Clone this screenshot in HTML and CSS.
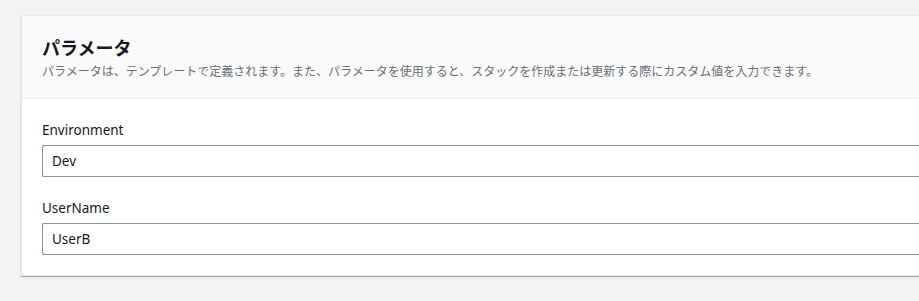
FILE: index.html
```html
<!DOCTYPE html>
<html lang="ja">
<head>
<meta charset="utf-8">
<link rel="stylesheet" href="styles.css">
</head>
<body>
<div class="page">
  <section class="card">
    <header class="card-header">
      <h2 class="title">パラメータ</h2>
      <p class="desc">パラメータは、テンプレートで定義されます。また、パラメータを使用すると、スタックを作成または更新する際にカスタム値を入力できます。</p>
    </header>
    <div class="card-body">
      <div class="field">
        <label class="label">Environment</label>
        <div class="input">Dev</div>
      </div>
      <div class="field">
        <label class="label">UserName</label>
        <div class="input">UserB</div>
      </div>
    </div>
  </section>
</div>
</body>
</html>
```
FILE: styles.css
```css
html, body {
  margin: 0;
  padding: 0;
  background: #f2f3f3;
  overflow: hidden;
}
body {
  width: 919px;
  height: 301px;
  font-family: "Noto Sans", "Noto Sans CJK JP", sans-serif;
  color: #16191f;
}
.page {
  padding: 15px 0 0 21px;
}
.card {
  width: 1000px;
  background: #ffffff;
  border: 1px solid #e1e4e4;
  border-right: none;
  border-top: 1px solid #eaeded;
  box-shadow: 0 1px 1px 0 rgba(0,28,36,0.3);
}
.card-header {
  background: #fafafa;
  border-bottom: 1px solid #eaeded;
  padding: 18px 20px 18px 20px;
}
.title {
  margin: 0;
  font-size: 18px;
  font-weight: 700;
  line-height: 26px;
  font-family: "Noto Sans CJK JP", sans-serif;
  color: #16191f;
}
.desc {
  margin: 2px 0 0 0;
  font-size: 12px;
  line-height: 18px;
  color: #687078;
  font-family: "Noto Sans CJK JP", sans-serif;
}
.card-body {
  padding: 20px 20px 20px 20px;
  display: flex;
  flex-direction: column;
  gap: 20px;
}
.field {
  display: flex;
  flex-direction: column;
  gap: 4px;
}
.label {
  font-size: 13.5px;
  line-height: 22px;
  color: #16191f;
}
.input {
  height: 30px;
  border: 1px solid #879596;
  border-radius: 2px;
  border-right: none;
  padding-left: 9px;
  font-size: 13.5px;
  line-height: 30px;
  color: #16191f;
}
```
